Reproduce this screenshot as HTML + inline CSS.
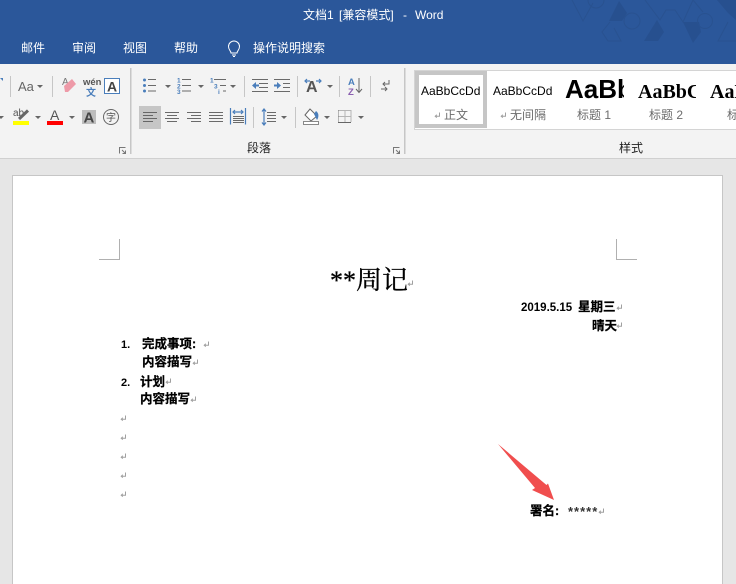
<!DOCTYPE html>
<html lang="zh">
<head>
<meta charset="utf-8">
<title>Word</title>
<style>
html,body{margin:0;padding:0;width:736px;height:584px;overflow:hidden;background:#e6e6e6}
svg{display:block}
text{font-family:"Liberation Sans","Noto Sans CJK SC",sans-serif}
.w{fill:#fff;font-size:12px}
.lb{fill:#6c6c6c;font-size:12px}
.gp{fill:#222;font-size:12px}
.b{fill:#000;font-size:12.5px;font-weight:700;stroke:#000;stroke-width:.25}
.g{stroke:#6a6a6a;stroke-width:1;fill:none}
.bl{stroke:#4a7ebb;stroke-width:1.2;fill:none}
</style>
</head>
<body>
<svg width="736" height="584" viewBox="0 0 736 584" xmlns="http://www.w3.org/2000/svg">
<defs>
<symbol id="ret" viewBox="0 0 7 7" overflow="visible">
<path d="M5.500 0.500V4.200H1.200M2.800 2.800L1.200 4.200L2.800 5.600" fill="none" stroke="#a0a0a0" stroke-width="1"/>
</symbol>
<path id="caret" d="M0 0H6L3 3Z" fill="#666"/>
<path id="launch" d="M0.500 6.500V0.500H6.500M3 3L6.500 6.500M6.500 3.500V6.500H3.500" fill="none" stroke="#777" stroke-width="1"/>
</defs>

<!-- backgrounds -->
<rect width="736" height="584" fill="#e6e6e6"/>
<rect width="736" height="64" fill="#2b579a"/>
<rect y="64" width="736" height="94" fill="#f3f3f3"/>
<rect y="158" width="736" height="1" fill="#d0d0d0"/>
<rect x="12.500" y="175.500" width="710" height="420" fill="#fff" stroke="#c6c6c6"/>

<!-- title bar pattern -->
<g fill="#27508f">
<path d="M619 1L627 13L622 21H609Z"/>
<path d="M657 20L664 32L658 41H644Z"/>
<path d="M683 22H699L701 32L693 43Z"/>
<path d="M717 0H736V20L728 13Z"/>
</g>
<g fill="none" stroke="#295290" stroke-width="1">
<path d="M572 0L583 21L593 3"/>
<circle cx="596" cy="0" r="8"/>
<circle cx="632" cy="21" r="8"/>
<circle cx="705" cy="21" r="7.500"/>
<path d="M610 22L602 32L608 41H621L614 28"/>
<path d="M645 0L660 20L666 10H675L683 22L693 0L703 12"/>
<path d="M728 22L718 41H736"/>
</g>

<!-- title and tabs -->
<text x="303" y="19" class="w">文档1</text>
<text x="339" y="19" class="w">[兼容模式]</text>
<text x="403" y="19" class="w">-</text>
<text x="415" y="19" class="w">Word</text>
<text x="21" y="52" class="w">邮件</text>
<text x="72" y="52" class="w">审阅</text>
<text x="123" y="52" class="w">视图</text>
<text x="174" y="52" class="w">帮助</text>
<path d="M231 53C231 51 228.500 50 228.500 46.500A5.500 5.500 0 0 1 239.500 46.500C239.500 50 237 51 237 53ZM232 55H236M233 56.500H235" fill="none" stroke="#fff" stroke-width="1"/>
<text x="253" y="52" class="w">操作说明搜索</text>

<!-- separators -->
<g fill="#c6c6c6">
<rect x="130" y="68" width="1.500" height="86"/>
<rect x="404" y="68" width="1.500" height="86"/>
<rect x="10" y="76" width="1" height="21"/>
<rect x="52" y="76" width="1" height="21"/>
<rect x="244" y="76" width="1" height="21"/>
<rect x="297" y="76" width="1" height="21"/>
<rect x="339" y="76" width="1" height="21"/>
<rect x="370" y="76" width="1" height="21"/>
<rect x="253" y="107" width="1" height="21"/>
<rect x="295" y="107" width="1" height="21"/>
<rect x="139" y="106" width="22" height="23"/>
</g>

<!-- font group -->
<path d="M0 78H3V81Z" fill="#4a7ebb"/>
<text x="18" y="91" style="font-size:13px;fill:#666">Aa</text>
<use href="#caret" x="37" y="85"/>
<text x="62" y="85" style="font-size:10px;fill:#777">A</text>
<path d="M64 86L72 79L76 84L68 92H65Z" fill="#ee9aa8"/>
<text x="83" y="85" style="font-size:9.500px;fill:#555;font-weight:700">wén</text>
<text x="86" y="96" style="font-size:10px;fill:#4a7ebb;font-weight:700">文</text>
<rect x="104.500" y="78.500" width="15" height="15" fill="#fff" stroke="#4a7ebb"/>
<text x="107" y="91.500" style="font-size:14px;fill:#444;font-weight:700">A</text>

<use href="#caret" x="-2" y="116"/>
<text x="13" y="116" style="font-size:10px;fill:#555">ab</text>
<path d="M19 119L28 110.500" stroke="#666" stroke-width="3"/>
<rect x="13" y="121" width="16" height="4" fill="#ff0"/>
<use href="#caret" x="35" y="116"/>
<text x="50" y="120" style="font-size:14px;fill:#555">A</text>
<rect x="47" y="121" width="16" height="4" fill="#f00"/>
<use href="#caret" x="69" y="116"/>
<rect x="82" y="110" width="14" height="14" fill="#bdbdbd"/>
<text x="83.500" y="122.500" style="font-size:15px;fill:#444;font-weight:700">A</text>
<circle cx="111" cy="117" r="7.500" fill="none" stroke="#666"/>
<text x="106" y="121" style="font-size:10px;fill:#555">字</text>
<use href="#launch" x="119" y="147"/>

<!-- paragraph row 1 -->
<g fill="#4a7ebb">
<circle cx="144.500" cy="80" r="1.500"/><circle cx="144.500" cy="85.500" r="1.500"/><circle cx="144.500" cy="91" r="1.500"/>
</g>
<path class="g" d="M148 79.500H156M148 85.500H156M148 91H156"/>
<use href="#caret" x="165" y="85"/>
<g style="font-size:6.500px;fill:#4a7ebb;font-weight:700">
<text x="177" y="82.500">1</text><text x="177" y="88.500">2</text><text x="177" y="94">3</text>
<text x="210" y="82.500">1</text><text x="214" y="88.500">3</text><text x="218" y="94">i</text>
</g>
<path class="g" d="M182 79.500H191M182 85.500H191M182 91H191M214 79.500H226M220 85.500H226M223 91H226"/>
<use href="#caret" x="198" y="85"/>
<use href="#caret" x="230" y="85"/>
<path class="g" d="M252 79.500H268M259 83.500H268M259 87.500H268M252 91.500H268"/>
<path d="M252 85.500L256 82V84.500H259V86.500H256V89Z" fill="#4a7ebb"/>
<path class="g" d="M274 79.500H290M283 83.500H290M283 87.500H290M274 91.500H290"/>
<path d="M281 85.500L277 82V84.500H274V86.500H277V89Z" fill="#4a7ebb"/>
<text x="306" y="92" style="font-size:16px;fill:#555;font-weight:700">A</text>
<path class="bl" d="M305 81H310M307 79L305 81L307 83M316 81H321M319 79L321 81L319 83"/>
<use href="#caret" x="327" y="85"/>
<text x="348" y="85" style="font-size:9.500px;fill:#4a7ebb;font-weight:700">A</text>
<text x="348" y="95" style="font-size:9.500px;fill:#8a5fb0;font-weight:700">Z</text>
<path d="M359 78V92M356 89L359 92.500L362 89" fill="none" stroke="#666"/>
<path d="M389 80V84H383M385 82L383 84L385 86M381 89H387M385 87L387 89L385 91" fill="none" stroke="#666"/>

<!-- paragraph row 2 -->
<path d="M143 112.500H157M143 115.500H153M143 118.500H157M143 121.500H153" stroke="#666" fill="none"/>
<path class="g" d="M165 112.500H179M167 115.500H177M165 118.500H179M167 121.500H177"/>
<path class="g" d="M187 112.500H201M191 115.500H201M187 118.500H201M191 121.500H201"/>
<path class="g" d="M209 112.500H223M209 115.500H223M209 118.500H223M209 121.500H223"/>
<path class="g" d="M233 116.500H244M233 118.500H244M233 120.500H244M233 122.500H244"/>
<path class="bl" d="M230.500 108V124.500M245.500 108V124.500M233 112H243M235 110L233 112L235 114M241 110L243 112L241 114"/>
<path class="bl" d="M264 109V125M262 111.500L264 109L266 111.500M262 122.500L264 125L266 122.500"/>
<path class="g" d="M267 112.500H276M267 115.500H276M267 118.500H276M267 121.500H276"/>
<use href="#caret" x="281" y="116"/>
<path d="M305 115L310 109L317 116L311 121Z" fill="#fff" stroke="#666"/>
<path d="M316 111C319 113 319 117 317 120L314 114Z" fill="#4a7ebb"/>
<rect x="303.500" y="121.500" width="15" height="3" fill="#fff" stroke="#888"/>
<use href="#caret" x="324" y="116"/>
<path d="M338.500 110.500H351M338.500 110.500V122M351 110.500V122M345 110.500V122M338.500 116.500H351" fill="none" stroke="#777" stroke-dasharray="1 1"/>
<path d="M338 122.500H351" stroke="#666"/>
<use href="#caret" x="358" y="116"/>
<use href="#launch" x="393" y="147"/>
<text x="247" y="152" class="gp">段落</text>

<!-- styles gallery -->
<rect x="414.500" y="70.500" width="330" height="59" fill="#fff" stroke="#d4d4d4"/>
<rect x="417" y="73" width="68" height="53" fill="#fff" stroke="#c6c6c6" stroke-width="4"/>
<text x="421" y="95" style="font-size:12px;fill:#000">AaBbCcDd</text>
<text x="493" y="95" style="font-size:12px;fill:#000">AaBbCcDd</text>
<svg x="565" y="72" width="59" height="40" viewBox="0 0 59 40"><text x="0" y="26" style="font-size:26px;font-weight:700;fill:#000">AaBb</text></svg>
<svg x="638" y="72" width="58" height="40" viewBox="0 0 58 40"><text x="0" y="26" style="font-size:20px;font-weight:700;fill:#000;font-family:'Liberation Serif',serif">AaBbC</text></svg>
<svg x="710" y="72" width="26" height="40" viewBox="0 0 26 40"><text x="0" y="26" style="font-size:20px;font-weight:700;fill:#000;font-family:'Liberation Serif',serif">AaBb</text></svg>
<use href="#ret" x="434" y="112" width="7" height="7"/>
<text x="444" y="119" class="lb">正文</text>
<use href="#ret" x="500" y="112" width="7" height="7"/>
<text x="510" y="119" class="lb">无间隔</text>
<text x="577" y="119" class="lb">标题 1</text>
<text x="649" y="119" class="lb">标题 2</text>
<text x="727" y="119" class="lb">标题</text>
<text x="619" y="152" class="gp">样式</text>

<!-- crop marks -->
<path d="M99 259.500H119.500V239M616.500 239V259.500H637" fill="none" stroke="#b0b0b0"/>

<!-- document -->
<text x="330" y="289" style="font-size:26px;fill:#000;stroke:#000;stroke-width:.3;font-family:'Liberation Serif','Noto Serif CJK SC',serif">**周记</text>
<use href="#ret" x="407" y="280" width="7" height="7"/>

<text x="521" y="311" style="font-size:11.500px;font-weight:700;fill:#000">2019.5.15</text>
<text x="578" y="311" class="b">星期三</text>
<use href="#ret" x="616" y="304" width="7" height="7"/>
<text x="592" y="330" class="b">晴天</text>
<use href="#ret" x="616" y="322" width="7" height="7"/>

<text x="121" y="348" style="font-size:11px;font-weight:700;fill:#000">1.</text>
<text x="142" y="348" class="b">完成事项:</text>
<use href="#ret" x="203" y="341" width="7" height="7"/>
<text x="142" y="366" class="b">内容描写</text>
<use href="#ret" x="192" y="359" width="7" height="7"/>
<text x="121" y="386" style="font-size:11px;font-weight:700;fill:#000">2.</text>
<text x="140" y="386" class="b">计划</text>
<use href="#ret" x="165" y="378" width="7" height="7"/>
<text x="140" y="403" class="b">内容描写</text>
<use href="#ret" x="190" y="396" width="7" height="7"/>

<use href="#ret" x="120" y="415" width="7" height="7"/>
<use href="#ret" x="120" y="434" width="7" height="7"/>
<use href="#ret" x="120" y="453" width="7" height="7"/>
<use href="#ret" x="120" y="472" width="7" height="7"/>
<use href="#ret" x="120" y="491" width="7" height="7"/>

<text x="530" y="515" class="b">署名:</text>
<text x="568" y="516" style="font-size:13px;letter-spacing:1px;font-weight:700;fill:#333">*****</text>
<use href="#ret" x="598" y="508" width="7" height="7"/>

<!-- red arrow -->
<path d="M498 444L546.500 485L548 483.500L554 500L532 490L535 488Z" fill="#f04e4e"/>
</svg>
</body>
</html>
